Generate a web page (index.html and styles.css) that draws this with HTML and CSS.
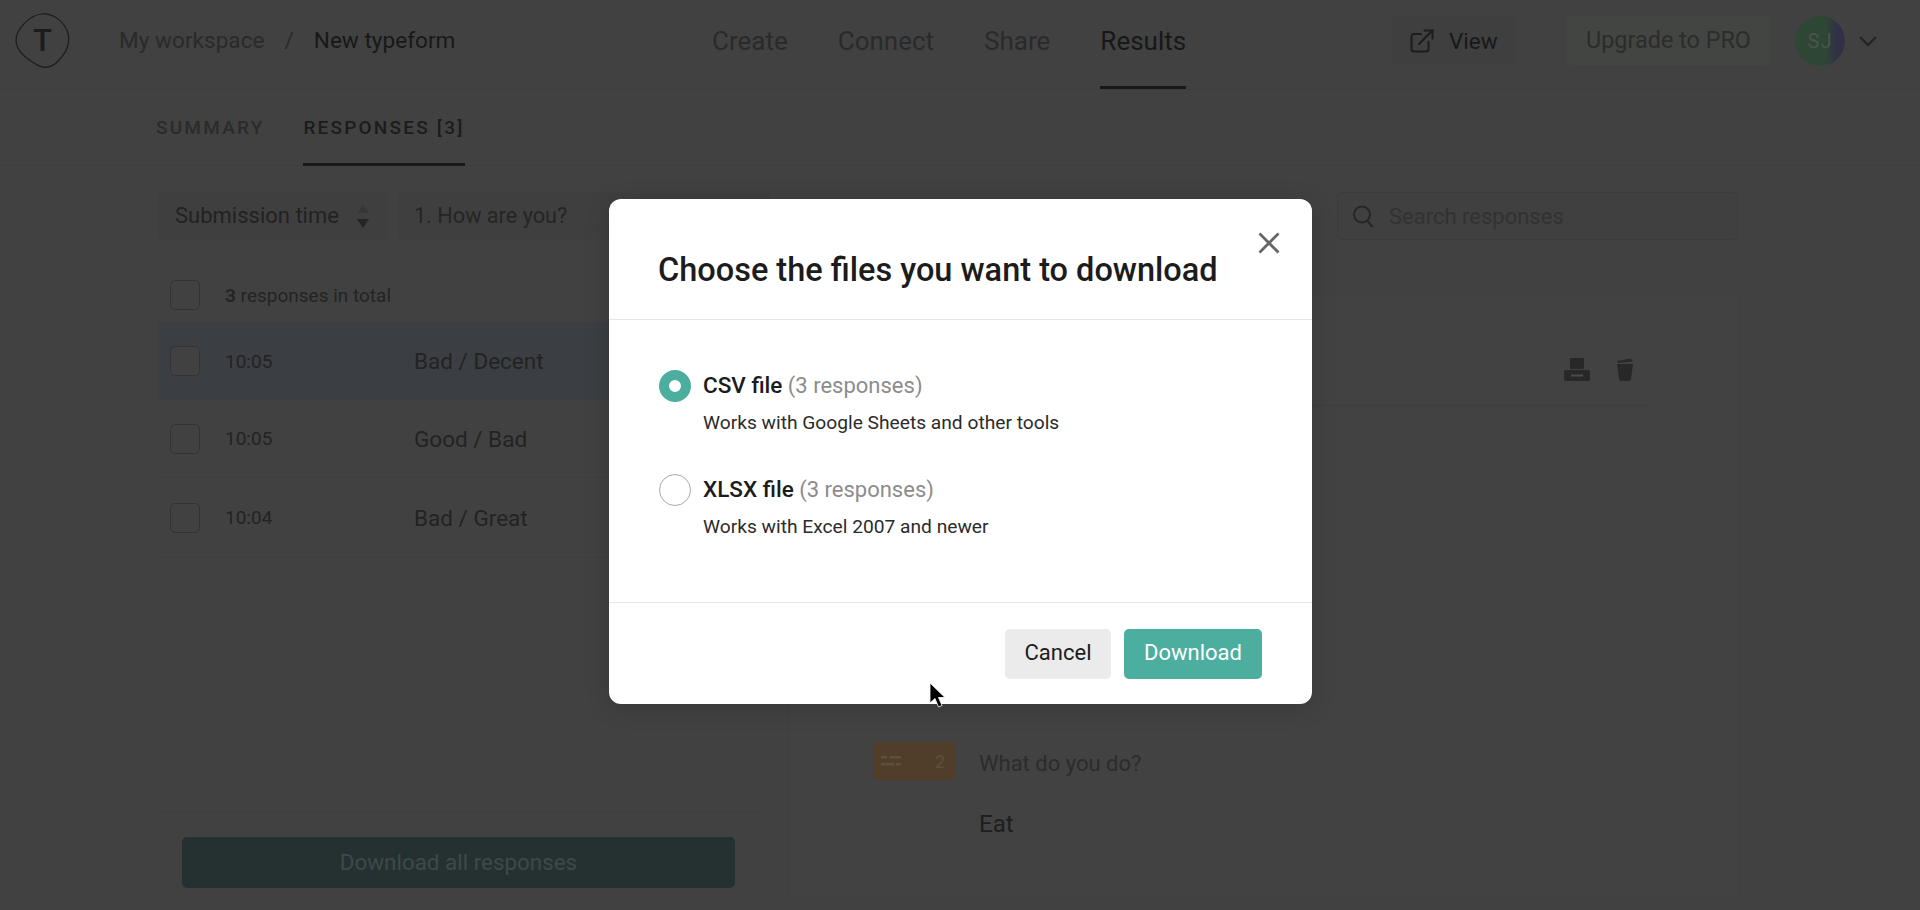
FILE: index.html
```html
<!DOCTYPE html>
<html lang="en">
<head>
<meta charset="utf-8">
<title>New typeform - Results</title>
<link rel="stylesheet" href="styles.css">
</head>
<body>
<div class="page">
  <header class="topbar">
    <div class="brand">
      <svg class="logo" width="57" height="57" viewBox="0 0 57 57" fill="none"><path d="M28 2C39 1 50 9 54 21C57 33 51 43 42 51C35 57 27 56 20 51C10 45 2 38 2 28C2 18 15 3 28 2Z" stroke="#1c1c1c" stroke-width="1.2"/></svg>
      <span class="logo-t">T</span>
    </div>
    <nav class="crumbs">
      <span class="crumb-dim">My workspace</span>
      <span class="crumb-slash">/</span>
      <span class="crumb-cur">New typeform</span>
    </nav>
    <nav class="mainnav">
      <a class="nav-item">Create</a>
      <a class="nav-item">Connect</a>
      <a class="nav-item">Share</a>
      <a class="nav-item active">Results</a>
    </nav>
    <div class="actions">
      <div class="btn-view">
        <svg width="24" height="24" viewBox="0 0 24 24" fill="none" stroke="#1c1c1c" stroke-width="2" stroke-linecap="round" stroke-linejoin="round"><path d="M11 5H4a2.500 2.500 0 0 0-2.500 2.500V20A2.500 2.500 0 0 0 4 22.500h12a2.500 2.500 0 0 0 2.500-2.500v-7"/><path d="M9 15L22.500 1.500"/><path d="M14.500 1.500h8v8"/></svg>
        <span>View</span>
      </div>
      <i class="act-sep"></i>
      <div class="btn-pro">Upgrade to PRO</div>
      <div class="avatar">SJ</div>
      <svg class="chev" width="18" height="12" viewBox="0 0 18 12" fill="none" stroke="#222" stroke-width="2.200"><path d="M1 2l8 8 8-8"/></svg>
    </div>
  </header>

  <div class="tabs">
    <a class="tab">SUMMARY</a>
    <a class="tab tab-on">RESPONSES [3]</a>
  </div>

  <div class="filters">
    <div class="sort">
      <span>Submission time</span>
      <svg width="14" height="26" viewBox="0 0 14 26"><path d="M7 1l6 9H1z" fill="#373737"/><path d="M7 25l6-9H1z" fill="#242424"/></svg>
    </div>
    <div class="col-head">1. How are you?</div>
    <div class="search">
      <svg width="22" height="24" viewBox="0 0 22 24" fill="none" stroke="#262626" stroke-width="2"><circle cx="10" cy="10.500" r="8"/><path d="M15.500 17l5 6"/></svg>
      <span>Search responses</span>
    </div>
  </div>

  <div class="content">
    <section class="list">
      <div class="count"><i class="check"></i><span><b>3</b> responses in total</span></div>
      <div class="row row-on"><i class="check"></i><span class="time">10:05</span><span class="answer">Bad / Decent</span></div>
      <div class="row"><i class="check"></i><span class="time">10:05</span><span class="answer">Good / Bad</span></div>
      <div class="row row-last"><i class="check"></i><span class="time">10:04</span><span class="answer">Bad / Great</span></div>
      <div class="list-foot"><div class="btn-all">Download all responses</div></div>
    </section>
    <section class="detail">
      <div class="detail-top">
        <svg width="26" height="23" viewBox="0 0 26 23"><path d="M6 0h14v11H6z" fill="#282828"/><path d="M2 12h22a2 2 0 0 1 2 2v7a2 2 0 0 1-2 2H2a2 2 0 0 1-2-2v-7a2 2 0 0 1 2-2z" fill="#282828"/><path d="M7 16.500h12v2H7z" fill="#4a4a4a"/></svg>
        <svg width="18" height="23" viewBox="0 0 18 23"><path d="M1 6h16l-2 15a2 2 0 0 1-2 2H5a2 2 0 0 1-2-2z" fill="#282828"/><path d="M1 3l14-2.500 1.500 3L2 5z" fill="#282828"/></svg>
      </div>
      <div class="qa">
        <div class="chip">
          <svg width="20" height="10" viewBox="0 0 20 10"><path d="M0 0h6v2.500H0zM9 0h11v2.500H9zM0 7h13v2.500H0zM15 7h5v2.500h-5z" fill="#5e4f3d"/></svg>
          <span>2</span>
        </div>
        <div class="qa-body">
          <div class="question">What do you do?</div>
          <div class="reply">Eat</div>
        </div>
      </div>
    </section>
  </div>
</div>

<div class="modal" role="dialog">
  <div class="modal-head">
    <h2>Choose the files you want to download</h2>
    <svg class="close" width="22" height="22" viewBox="0 0 22 22" stroke="#666" stroke-width="2.800" fill="none"><path d="M1.500 1.500l19 19M20.500 1.500l-19 19"/></svg>
  </div>
  <div class="modal-body">
    <div class="option">
      <i class="radio radio-on"></i>
      <div>
        <div class="opt-title"><b>CSV file</b> <span>(3 responses)</span></div>
        <div class="opt-sub">Works with Google Sheets and other tools</div>
      </div>
    </div>
    <div class="option">
      <i class="radio"></i>
      <div>
        <div class="opt-title"><b>XLSX file</b> <span>(3 responses)</span></div>
        <div class="opt-sub">Works with Excel 2007 and newer</div>
      </div>
    </div>
  </div>
  <div class="modal-foot">
    <div class="btn-cancel">Cancel</div>
    <div class="btn-download">Download</div>
  </div>
</div>

<svg class="cursor" width="17" height="25" viewBox="0 0 17 25"><path d="M1 0v20l5-4.500 3.500 8.500 3.500-1.500-3.500-8H16z" fill="#000" stroke="#fff" stroke-width=".8"/></svg>
</body>
</html>
```
FILE: styles.css
```css
* { box-sizing: border-box; }
html, body { margin: 0; height: 100%; overflow: hidden; }
body { background: #414141; font-family: "Roboto", "Liberation Sans", sans-serif; color: #1c1c1c; position: relative; }
.page { height: 910px; display: flex; flex-direction: column; }

.topbar { height: 90px; flex: none; display: flex; align-items: center; padding-bottom: 8px; border-bottom: 1px solid #3e3e3e; }
.brand { width: 94px; height: 48px; border-right: 1px solid #3f3f3f; position: relative; display: flex; align-items: center; flex: none; }
.logo { margin-left: 14px; flex: none; }
.logo-t { position: absolute; left: 33px; top: 5px; font-size: 31px; font-weight: 500; line-height: 38px; color: #1c1c1c; width: 19px; text-align: center; }
.crumbs { margin-left: 25px; font-size: 22.600px; display: flex; width: 593px; flex: none; }
.crumb-dim { color: #2a2a2a; }
.crumb-slash { color: #2a2a2a; margin: 0 20px; }
.crumb-cur { color: #181818; }
.mainnav { display: flex; gap: 50px; font-size: 26px; align-self: stretch; margin-bottom: -8px; flex: none; }
.nav-item { color: #2a2a2a; height: 89px; line-height: 82px; border-bottom: 3px solid transparent; }
.nav-item.active { color: #181818; border-bottom-color: #181818; }
.actions { display: flex; align-items: center; margin-left: auto; padding-right: 43px; font-size: 22.500px; }
.btn-view { width: 124px; height: 49px; background: #3f3f3f; border-radius: 4px; display: flex; align-items: center; padding-left: 18px; gap: 15px; color: #181818; }
.act-sep { width: 1px; height: 48px; background: #3f3f3f; margin: 0 25px; }
.btn-pro { width: 203px; height: 49px; background: #434543; border-radius: 4px; color: #2c2c2c; text-align: center; line-height: 49px; font-size: 23.400px; }
.avatar { width: 50px; height: 50px; border-radius: 50%; margin-left: 25px; background: linear-gradient(90deg, #2e4734 0 60%, #322f48 85%); color: #4a544c; text-align: center; line-height: 50px; font-size: 20px; letter-spacing: 1px; }
.chev { margin-left: 14px; }

.tabs { height: 76px; flex: none; display: flex; padding-left: 156px; gap: 39px; border-bottom: 1px solid #3e3e3e; font-size: 19px; font-weight: 500; letter-spacing: 2.200px; }
.tab { line-height: 76px; color: #2b2b2b; height: 76px; }
.tab-on { color: #1c1c1c; border-bottom: 3px solid #181818; }

.filters { display: flex; margin-top: 26px; padding-left: 158px; height: 48px; flex: none; font-size: 22px; }
.sort { width: 230px; height: 47px; background: #3f3f3f; border-radius: 4px; display: flex; align-items: center; padding-left: 17px; gap: 17px; color: #222; }
.col-head { margin-left: 10px; width: 372px; height: 47px; background: #3f3f3f; border-radius: 4px; padding-left: 16px; line-height: 47px; color: #252525; font-size: 21.700px; }
.search { margin-left: 567px; width: 401px; height: 48px; border: 1px solid #3b3b3b; border-radius: 4px; background: #404040; display: flex; align-items: center; padding-left: 14px; gap: 15px; color: #323232; }

.content { flex: 1; display: flex; padding-left: 158px; padding-top: 28px; min-height: 0; }
.list { width: 602px; display: flex; flex-direction: column; flex: none; }
.count { height: 54px; display: flex; align-items: center; padding-left: 12px; gap: 25px; font-size: 19px; color: #242424; flex: none; }
.check { width: 30px; height: 30px; border: 1.500px solid #333; border-radius: 5px; display: block; flex: none; }
.row { height: 78px; display: flex; align-items: center; padding-left: 12px; border-bottom: 1px solid #3e3e3e; flex: none; }
.row-on { background: #3b3e42; border-bottom: 0; }
.row-on .check { background: #414141; }
.row-last { height: 80px; }
.time { margin-left: 25px; width: 189px; font-size: 19px; color: #232323; }
.answer { font-size: 22.500px; color: #232323; }
.list-foot { margin-top: auto; border-top: 1px solid #3e3e3e; padding: 24px 25px 22px 24px; }
.btn-all { height: 51px; background: #253131; border-radius: 5px; color: #3d4949; text-align: center; line-height: 50px; font-size: 22.400px; }

.detail { margin-left: 28px; margin-top: 27px; width: 951px; height: 603px; flex: none; border: 1px solid #3f3f3f; background: #424242; }
.detail-top { height: 110px; margin: 0 88px 0 84px; border-bottom: 1px solid #3e3e3e; display: flex; justify-content: flex-end; gap: 26px; padding: 62px 16px 0 0; }
.qa { display: flex; margin: 336px 0 0 84px; gap: 24px; }
.chip { width: 82px; height: 38px; background: #503e29; border-radius: 4px; display: flex; align-items: center; justify-content: space-between; padding: 0 10px 0 8px; color: #5e4f3d; font-size: 18px; }
.qa-body { padding-top: 9px; }
.question { font-size: 22px; line-height: 26px; color: #2c2c2c; }
.reply { font-size: 24px; line-height: 30px; color: #1e1e1e; margin-top: 32px; }

.modal { position: absolute; left: 609px; top: 199px; width: 703px; height: 505px; background: #fff; border-radius: 12px; box-shadow: 0 4px 24px rgba(0,0,0,.15); display: flex; flex-direction: column; }
.modal-head { height: 121px; border-bottom: 1px solid #e6e6e6; padding: 48px 49px 0; position: relative; flex: none; }
.modal-head h2 { margin: 0; font-size: 32.500px; line-height: 46px; font-weight: 500; color: #1c1c1c; white-space: nowrap; }
.close { position: absolute; left: 649px; top: 33px; }
.modal-body { height: 283px; border-bottom: 1px solid #e6e6e6; padding: 49px 50px 0; flex: none; }
.option { display: flex; gap: 12px; height: 104px; }
.radio { width: 32px; height: 32px; border: 1.500px solid #aaa; border-radius: 50%; flex: none; display: block; margin-top: 1px; }
.radio-on { border: 10.500px solid #4bae9e; background: #fff; }
.opt-title { font-size: 22px; line-height: 32px; color: #8c8c8c; }
.opt-title b { color: #1c1c1c; font-weight: 500; font-size: 22.500px; }
.opt-sub { font-size: 19.200px; line-height: 26px; color: #2b2b2b; margin-top: 8px; }
.modal-foot { flex: 1; display: flex; justify-content: flex-end; gap: 13px; padding: 26px 50px 0 0; font-size: 22px; }
.btn-cancel { width: 106px; height: 50px; background: #ebebeb; border-radius: 5px; text-align: center; line-height: 47px; color: #1c1c1c; }
.btn-download { width: 138px; height: 50px; background: #4bae9e; border-radius: 5px; text-align: center; line-height: 47px; color: #fff; }

.cursor { position: absolute; left: 929px; top: 683px; }
```
